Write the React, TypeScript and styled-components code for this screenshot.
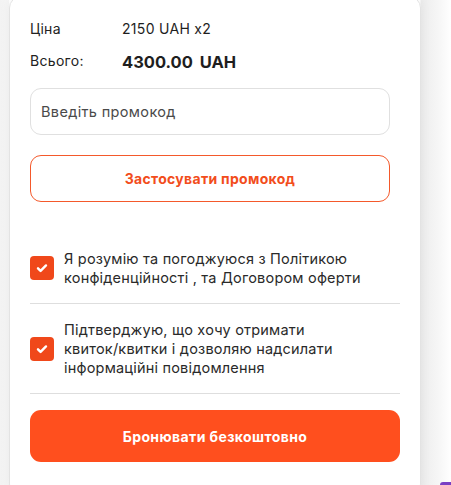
import React from "react";
import styled, { createGlobalStyle } from "styled-components";

const Global = createGlobalStyle`
  html, body { margin: 0; padding: 0; }
  body {
    width: 451px;
    height: 485px;
    overflow: hidden;
    background: linear-gradient(90deg, #f3f3f3 0px, #f6f6f6 9px, #ffffff 9px, #ffffff 420px, #ececec 421px, #f7f7f7 440px, #ffffff 451px);
    font-family: "Inter", "Noto Sans", sans-serif;
    color: #222;
  }
`;

const Page = styled.div`
  position: relative;
  width: 451px;
  height: 485px;
  overflow: hidden;
`;

const Card = styled.div`
  box-sizing: border-box;
  margin: -4px 0 0 9px;
  width: 412px;
  height: 500px;
  background: #fff;
  border: 1px solid #e3e3e3;
  border-radius: 12px;
  box-shadow: 0 0 12px rgba(0, 0, 0, 0.05);
  padding: 21px 20px 0 20px;
  display: flex;
  flex-direction: column;
  letter-spacing: 0.3px;
`;

const InfoRow = styled.div<{ $gap: number }>`
  display: grid;
  grid-template-columns: 92px 1fr;
  align-items: center;
  height: 20px;
  margin-bottom: ${(p) => p.$gap}px;
`;

const Label = styled.span`
  font-size: 14px;
  color: #222;
`;

const Value = styled.span<{ $bold?: boolean }>`
  font-size: ${(p) => (p.$bold ? "16.5px" : "14px")};
  font-weight: ${(p) => (p.$bold ? 700 : 400)};
  letter-spacing: ${(p) => (p.$bold ? "0" : "0.3px")};
  color: #1e1e1e;
  word-spacing: ${(p) => (p.$bold ? "3px" : "0")};
  margin-top: ${(p) => (p.$bold ? "3px" : "0")};
`;

const Input = styled.input`
  box-sizing: border-box;
  width: 360px;
  height: 47px;
  border: 1px solid #e0e0e0;
  border-radius: 11px;
  padding: 0 10px;
  font-family: inherit;
  font-size: 14.5px;
  letter-spacing: 0.35px;
  color: #333;
  outline: none;
  &::placeholder { color: #4a4a4a; }
`;

const OutlineButton = styled.button`
  box-sizing: border-box;
  width: 360px;
  height: 47px;
  margin-top: 20px;
  border: 1px solid #f4592b;
  border-radius: 11px;
  background: #fff;
  color: #f24d1c;
  font-family: inherit;
  font-weight: 700;
  font-size: 14px;
  letter-spacing: 0.3px;
`;

const Consents = styled.div`
  margin-top: 47px;
  width: 370px;
  display: flex;
  flex-direction: column;
`;

const ConsentRow = styled.label<{ $last?: boolean }>`
  display: flex;
  align-items: center;
  gap: 10px;
  padding: ${(p) => (p.$last ? "16px 0 16px" : "0 0 16px")};
  border-bottom: 1px solid #dedede;
`;

const Box = styled.span`
  flex: none;
  width: 24px;
  height: 24px;
  border-radius: 4px;
  background: #f0481a;
  display: flex;
  align-items: center;
  justify-content: center;
`;

const ConsentText = styled.span`
  font-size: 14.5px;
  line-height: 19px;
  letter-spacing: 0.2px;
  color: #2a2a2a;
`;

const PrimaryButton = styled.button`
  box-sizing: border-box;
  width: 370px;
  height: 52px;
  margin-top: 16px;
  border: none;
  border-radius: 11px;
  background: #ff4f1e;
  color: #fff;
  font-family: inherit;
  font-weight: 700;
  font-size: 14px;
  letter-spacing: 0.4px;
`;

const Corner = styled.div`
  position: absolute;
  left: 440px;
  top: 482px;
  width: 14px;
  height: 6px;
  border-radius: 3px 0 0 0;
  background: #7a3fc4;
`;

const Check = () => (
  <svg width="14" height="14" viewBox="0 0 14 14">
    <path d="M3 7.3l2.6 2.6L11 4.4" fill="none" stroke="#fff" strokeWidth="2.4" strokeLinecap="round" strokeLinejoin="round" />
  </svg>
);

export default function App() {
  return (
    <Page>
      <Global />
      <Card>
        <InfoRow $gap={11}>
          <Label>Ціна</Label>
          <Value>2150 UAH x2</Value>
        </InfoRow>
        <InfoRow $gap={19}>
          <Label>Всього:</Label>
          <Value $bold>4300.00 UAH</Value>
        </InfoRow>
        <Input placeholder="Введіть промокод" />
        <OutlineButton>Застосувати промокод</OutlineButton>
        <Consents>
          <ConsentRow>
            <Box><Check /></Box>
            <ConsentText>Я розумію та погоджуюся з Політикою конфіденційності , та Договором оферти</ConsentText>
          </ConsentRow>
          <ConsentRow $last>
            <Box><Check /></Box>
            <ConsentText>
              {"Підтверджую, що хочу отримати квиток/\u2060квитки і дозволяю надсилати інформаційні повідомлення"}
            </ConsentText>
          </ConsentRow>
        </Consents>
        <PrimaryButton>Бронювати безкоштовно</PrimaryButton>
      </Card>
      <Corner />
    </Page>
  );
}
